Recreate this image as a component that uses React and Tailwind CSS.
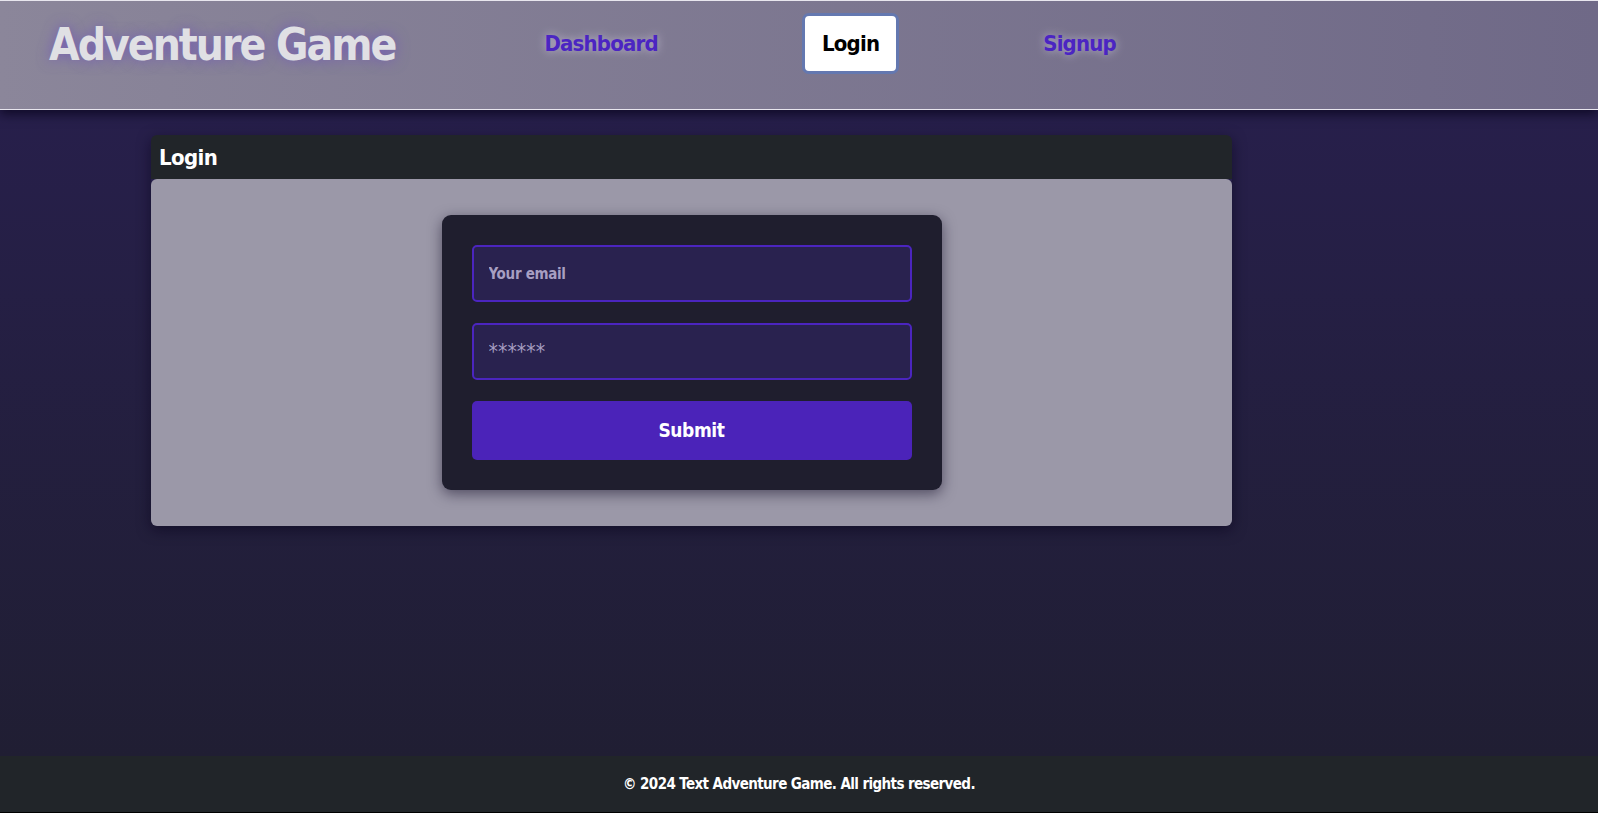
import React, { useState } from 'react';

const font = { fontFamily: '"DejaVu Sans Condensed", "Liberation Sans", sans-serif' };

function Header() {
  return (
    <header className="h-[110px] flex items-start border-y border-[#e8e6ee] bg-gradient-to-r from-[#8b869a] to-[#6f6987] shadow-[0_4px_10px_rgba(10,5,30,0.8)] relative z-10">
      <h1 className="ml-[49px] mt-[18px] text-[44px] leading-[52px] font-bold tracking-[-2px] text-[#e0e0e4] [text-shadow:0_0_14px_rgba(110,80,190,0.75)]">
        Adventure Game
      </h1>
      <nav className="ml-[126px] mt-[12px] flex gap-[121px] items-center">
        <a className="px-[20px] h-[61px] flex items-center border-[3px] border-transparent text-[22px] font-bold tracking-[-0.8px] text-[#4b25c2] [text-shadow:0_0_10px_rgba(230,225,245,0.6)]">
          Dashboard
        </a>
        <a className="px-[17px] h-[61px] flex items-center rounded-[7px] border-[3px] border-[#6478b0] bg-white text-[22px] font-bold tracking-[-0.8px] text-black">
          Login
        </a>
        <a className="px-[20px] h-[61px] flex items-center border-[3px] border-transparent text-[22px] font-bold tracking-[-0.8px] text-[#4b25c2] [text-shadow:0_0_10px_rgba(230,225,245,0.6)]">
          Signup
        </a>
      </nav>
    </header>
  );
}

function LoginForm() {
  const [email, setEmail] = useState('');
  const [password, setPassword] = useState('');

  return (
    <form
      className="w-[500px] mx-auto bg-[#1f1e2e] rounded-[9px] p-[30px] flex flex-col gap-[21px] shadow-[0_4px_14px_rgba(20,15,40,0.55)]"
      onSubmit={(e) => e.preventDefault()}
    >
      <input
        type="email"
        value={email}
        onChange={(e) => setEmail(e.target.value)}
        placeholder="Your email"
        className="h-[57px] w-full rounded-[5px] border-2 border-[#4b25bf] bg-[#29224f] px-[15px] text-[15px] font-bold tracking-[-0.3px] text-[#e0dcef] placeholder:text-[#a79fc2] outline-none"
      />
      <input
        type="password"
        value={password}
        onChange={(e) => setPassword(e.target.value)}
        placeholder="******"
        className="h-[57px] w-full rounded-[5px] border-2 border-[#4b25bf] bg-[#29224f] px-[15px] text-[21px] text-[#e0dcef] placeholder:text-[#a79fc2] outline-none"
      />
      <button
        type="submit"
        className="h-[59px] w-full rounded-[5px] bg-[#4b23b9] text-[19px] font-bold tracking-[-0.4px] text-white"
      >
        Submit
      </button>
    </form>
  );
}

export default function App() {
  return (
    <div className="min-h-screen flex flex-col" style={font}>
      <Header />
      <main className="flex-1 bg-gradient-to-b from-[#271f4b] to-[#201e33] pt-[25px]">
        <div className="ml-[151px] w-[1081px] rounded-[6px] shadow-[0_4px_14px_rgba(10,5,30,0.6)]">
          <div className="h-[44px] bg-[#212529] rounded-t-[6px] px-[8px] flex items-center">
            <h2 className="text-[22px] font-bold tracking-[-0.6px] text-white">Login</h2>
          </div>
          <div className="bg-[#9b98a8] rounded-[6px] py-[36px]">
            <LoginForm />
          </div>
        </div>
      </main>
      <footer className="h-[57px] bg-[#212529] flex items-center justify-center border-b border-black">
        <p className="text-[15px] font-bold tracking-[-0.6px] text-white">© 2024 Text Adventure Game. All rights reserved.</p>
      </footer>
    </div>
  );
}
